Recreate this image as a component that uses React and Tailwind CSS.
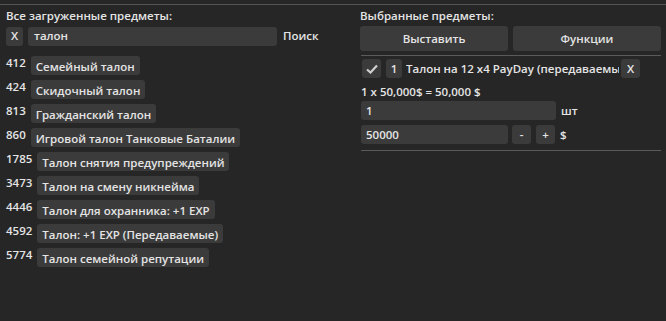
import React from "react";

const items = [
  ["412", "Семейный талон"],
  ["424", "Скидочный талон"],
  ["813", "Гражданский талон"],
  ["860", "Игровой талон Танковые Баталии"],
  ["1785", "Талон снятия предупреждений"],
  ["3473", "Талон на смену никнейма"],
  ["4446", "Талон для охранника: +1 EXP"],
  ["4592", "Талон: +1 EXP (Передаваемые)"],
  ["5774", "Талон семейной репутации"],
];

const font = { fontFamily: "'Open Sans', 'DejaVu Sans', sans-serif" };

export default function App() {
  return (
    <div
      className="w-[666px] h-[321px] bg-[#262626] text-[#e4e4e4] text-[11.5px] font-semibold leading-[16px] overflow-hidden pt-[4px]"
      style={font}
    >
      <div className="h-px bg-[#555555]" />
      <div className="flex">
        {/* Left: all items */}
        <div className="w-[354px] pl-[6px] pt-[3px]">
          <div className="h-[16px]">Все загруженные предметы:</div>
          <div className="flex items-center mt-[2px] h-[20px]">
            <button className="w-[17px] h-[19px] rounded-[3px] bg-[#3b3b3b] text-[#e4e4e4] flex items-center justify-center">
              X
            </button>
            <div className="ml-[5px] w-[249px] h-[19px] rounded-[3px] bg-[#3b3b3b] pl-[6px] flex items-center">
              талон
            </div>
            <span className="ml-[6px]">Поиск</span>
          </div>
          <div className="mt-[10px] flex flex-col gap-[5px]">
            {items.map(([id, name]) => (
              <div key={id} className="flex items-start h-[19px]">
                <span className="-mt-[1px]">{id}</span>
                <span className="ml-[5px] h-[19px] px-[5px] rounded-[3px] bg-[#3b3b3b] flex items-center pt-[2px]">
                  {name}
                </span>
              </div>
            ))}
          </div>
        </div>

        {/* Right: selected items */}
        <div className="w-[301px] ml-[6px] pt-[3px]">
          <div className="h-[16px]">Выбранные предметы:</div>
          <div className="flex gap-[5px] mt-[2px]">
            <button className="flex-1 h-[25px] rounded-[3px] bg-[#3b3b3b] text-[#e4e4e4]">
              Выставить
            </button>
            <button className="flex-1 h-[25px] rounded-[3px] bg-[#3b3b3b] text-[#e4e4e4]">
              Функции
            </button>
          </div>
          <div className="h-px bg-[#5a5a5a] mt-[4px] ml-[1px]" />
          <div className="flex items-center mt-[3px] h-[19px] pl-[2px]">
            <button className="w-[19px] h-[19px] rounded-[3px] bg-[#3b3b3b] flex items-center justify-center">
              <svg width="12" height="10" viewBox="0 0 12 10">
                <path d="M1 5.5 L4.5 8.5 L11 1.5" fill="none" stroke="#cfcfcf" strokeWidth="2.2" />
              </svg>
            </button>
            <button className="ml-[5px] w-[16px] h-[19px] rounded-[3px] bg-[#3b3b3b] text-[#e4e4e4] flex items-center justify-center">
              1
            </button>
            <div className="ml-[4px] w-[213px] overflow-hidden whitespace-nowrap">
              Талон на 12 x4 PayDay (передаваемые)
            </div>
            <button className="ml-[2px] w-[19px] h-[19px] rounded-[3px] bg-[#3b3b3b] text-[#e4e4e4] flex items-center justify-center">
              X
            </button>
          </div>
          <div className="mt-[6px] pl-[1px]">1 x 50,000$ = 50,000 $</div>
          <div className="flex items-center mt-[1px] pl-[1px]">
            <div className="w-[195px] h-[19px] rounded-[3px] bg-[#3b3b3b] pl-[5px] flex items-center">1</div>
            <span className="ml-[5px]">шт</span>
          </div>
          <div className="flex items-center mt-[5px] pl-[1px]">
            <div className="w-[147px] h-[19px] rounded-[3px] bg-[#3b3b3b] pl-[5px] flex items-center">50000</div>
            <button className="ml-[4px] w-[19px] h-[19px] rounded-[3px] bg-[#3b3b3b] text-[#e4e4e4] flex items-center justify-center">
              -
            </button>
            <button className="ml-[5px] w-[19px] h-[19px] rounded-[3px] bg-[#3b3b3b] text-[#e4e4e4] flex items-center justify-center">
              +
            </button>
            <span className="ml-[5px]">$</span>
          </div>
          <div className="h-px bg-[#5a5a5a] mt-[6px] ml-[1px]" />
        </div>
      </div>
    </div>
  );
}
